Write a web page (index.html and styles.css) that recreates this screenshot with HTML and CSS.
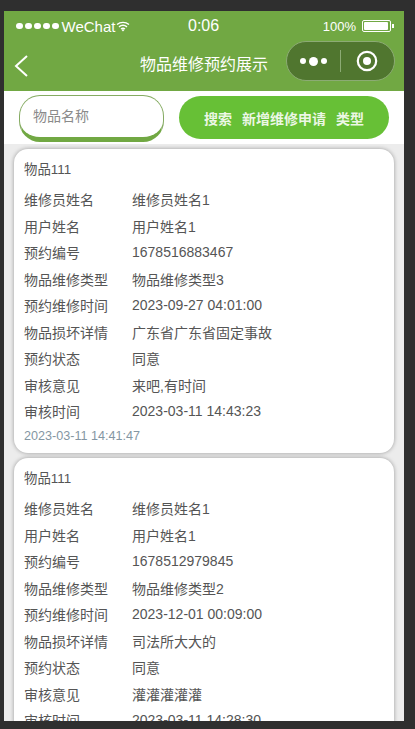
FILE: index.html
```html
<!DOCTYPE html>
<html lang="zh">
<head>
<meta charset="utf-8">
<title>物品维修预约展示</title>
<link rel="stylesheet" href="styles.css">
</head>
<body>
<div class="phone">
  <header class="top">
    <div class="status">
      <div class="status-left">
        <span class="dots"><i></i><i></i><i></i><i></i><i></i></span>
        <span class="carrier">WeChat</span>
        <svg class="wifi" width="14" height="11" viewBox="0 0 14 11"><path d="M1 3.6C4.4.6 9.6.6 13 3.6M3 5.9c2.4-2 5.600-2 8 0M5 8c1.200-.9 2.800-.9 4 0" fill="none" stroke="#fff" stroke-width="1.400"/><path d="M5.600 9 7 10.500 8.400 9a2 2 0 0 0-2.800 0z" fill="#fff"/></svg>
      </div>
      <div class="time">0:06</div>
      <div class="status-right">
        <span class="pct">100%</span>
        <span class="battery"><span class="battery-fill"></span></span>
        <span class="battery-tip"></span>
      </div>
    </div>
    <div class="nav">
      <svg class="back" width="14" height="22" viewBox="0 0 14 22"><path d="M13 1 2 11l11 10" fill="none" stroke="#fff" stroke-width="2"/></svg>
      <div class="title">物品维修预约展示</div>
      <div class="capsule">
        <span class="more"><i></i><i class="big"></i><i></i></span>
        <span class="sep"></span>
        <svg class="target" width="22" height="22" viewBox="0 0 22 22"><circle cx="11" cy="11" r="9.200" fill="none" stroke="#fff" stroke-width="2.200"/><circle cx="11" cy="11" r="4" fill="#fff"/></svg>
      </div>
    </div>
  </header>
  <section class="search">
    <div class="input">物品名称</div>
    <div class="actions"><span>搜索</span><span>新增维修申请</span><span>类型</span></div>
  </section>
  <main class="list">
    <article class="card">
      <h2 class="name">物品111</h2>
      <div class="row"><span class="k">维修员姓名</span><span class="v">维修员姓名1</span></div>
      <div class="row"><span class="k">用户姓名</span><span class="v">用户姓名1</span></div>
      <div class="row"><span class="k">预约编号</span><span class="v">1678516883467</span></div>
      <div class="row"><span class="k">物品维修类型</span><span class="v">物品维修类型3</span></div>
      <div class="row"><span class="k">预约维修时间</span><span class="v">2023-09-27 04:01:00</span></div>
      <div class="row"><span class="k">物品损坏详情</span><span class="v">广东省广东省固定事故</span></div>
      <div class="row"><span class="k">预约状态</span><span class="v">同意</span></div>
      <div class="row"><span class="k">审核意见</span><span class="v">来吧,有时间</span></div>
      <div class="row"><span class="k">审核时间</span><span class="v">2023-03-11 14:43:23</span></div>
      <div class="date">2023-03-11 14:41:47</div>
    </article>
    <article class="card">
      <h2 class="name">物品111</h2>
      <div class="row"><span class="k">维修员姓名</span><span class="v">维修员姓名1</span></div>
      <div class="row"><span class="k">用户姓名</span><span class="v">用户姓名1</span></div>
      <div class="row"><span class="k">预约编号</span><span class="v">1678512979845</span></div>
      <div class="row"><span class="k">物品维修类型</span><span class="v">物品维修类型2</span></div>
      <div class="row"><span class="k">预约维修时间</span><span class="v">2023-12-01 00:09:00</span></div>
      <div class="row"><span class="k">物品损坏详情</span><span class="v">司法所大大的</span></div>
      <div class="row"><span class="k">预约状态</span><span class="v">同意</span></div>
      <div class="row"><span class="k">审核意见</span><span class="v">灌灌灌灌灌</span></div>
      <div class="row"><span class="k">审核时间</span><span class="v">2023-03-11 14:28:30</span></div>
    </article>
  </main>
</div>
</body>
</html>
```

FILE: styles.css
```css
* { box-sizing: border-box; }
html, body { margin: 0; height: 100%; overflow: hidden; }
body {
  background: #2f2f2f;
  padding: 11px 11px 8px 4px;
  font-family: "Liberation Sans", "Noto Sans CJK SC", sans-serif;
}
.phone {
  width: 400px;
  height: 710px;
  overflow: hidden;
  display: flex;
  flex-direction: column;
  background: #ececec;
}
.top { background: #71a843; color: #fff; height: 80px; flex: none; }
.status {
  height: 30px;
  padding: 0 10px 0 12px;
  display: flex;
  align-items: center;
  justify-content: space-between;
  position: relative;
}
.status-left { display: flex; align-items: center; width: 130px; }
.dots { display: flex; gap: 2.500px; margin-right: 3px; }
.dots i { width: 6.500px; height: 6.500px; border-radius: 50%; background: #fff; display: block; }
.carrier { font-size: 15px; margin-right: 1px; }
.wifi { margin-top: 1px; }
.time { font-size: 16px; position: absolute; left: 184px; }
.status-right { display: flex; align-items: center; }
.pct { font-size: 13px; margin-right: 6px; }
.battery { width: 29px; height: 12px; border: 1px solid #fff; border-radius: 2px; padding: 1px; display: block; }
.battery-fill { display: block; height: 100%; width: 24px; background: #fff; border-radius: 1px; }
.battery-tip { width: 2px; height: 4px; background: #fff; margin-left: 1px; }
.nav {
  height: 50px;
  display: flex;
  align-items: flex-start;
  justify-content: center;
  padding-top: 14px;
  position: relative;
}
.back { position: absolute; left: 10px; top: 14px; }
.title { font-size: 16px; line-height: 20px; }
.capsule {
  position: absolute;
  left: 282px;
  top: 0;
  width: 109px;
  height: 40px;
  border-radius: 20px;
  background: #50762f;
  border: 1px solid #8cab74;
  display: flex;
  align-items: center;
}
.more { display: flex; align-items: center; gap: 3px; width: 53px; justify-content: center; }
.more i { width: 6px; height: 6px; border-radius: 50%; background: #fff; display: block; }
.more i.big { width: 9px; height: 9px; }
.sep { width: 1px; height: 22px; background: #8cab74; }
.target { margin-left: 15px; }
.search {
  background: #fff;
  height: 53px;
  flex: none;
  display: flex;
  align-items: flex-start;
  padding: 4px 15px 0 15px;
}
.input {
  width: 145px;
  height: 47px;
  border: 1px solid #85ab62;
  border-bottom: 5px solid #71a843;
  border-radius: 21px;
  padding: 0 13px;
  line-height: 40px;
  font-size: 14px;
  color: #8a8a8a;
  background: #fff;
}
.actions {
  margin-left: 15px;
  margin-top: 1px;
  width: 210px;
  height: 43px;
  border-radius: 22px;
  background: #67c036;
  color: rgba(255,255,255,.88);
  font-size: 14px;
  font-weight: bold;
  display: flex;
  align-items: center;
  justify-content: center;
  gap: 10px;
}
.list { flex: 1; padding: 5px 10px 0; overflow: hidden; }
.card {
  background: #fff;
  border-radius: 14px;
  box-shadow: 0 0 4px rgba(0,0,0,.35);
  margin-bottom: 5px;
  padding: 12px 10px 0;
  height: 304px;
  color: #555;
}
.card:last-child { height: auto; }
.name { font-size: 13.400px; font-weight: normal; margin: 0 0 7px; line-height: 18px; }
.row { display: flex; height: 26.500px; align-items: center; font-size: 14px; }
.k { width: 108px; flex: none; }
.date { font-size: 12.600px; color: #8496a3; margin-top: 3px; line-height: 16px; }
```
